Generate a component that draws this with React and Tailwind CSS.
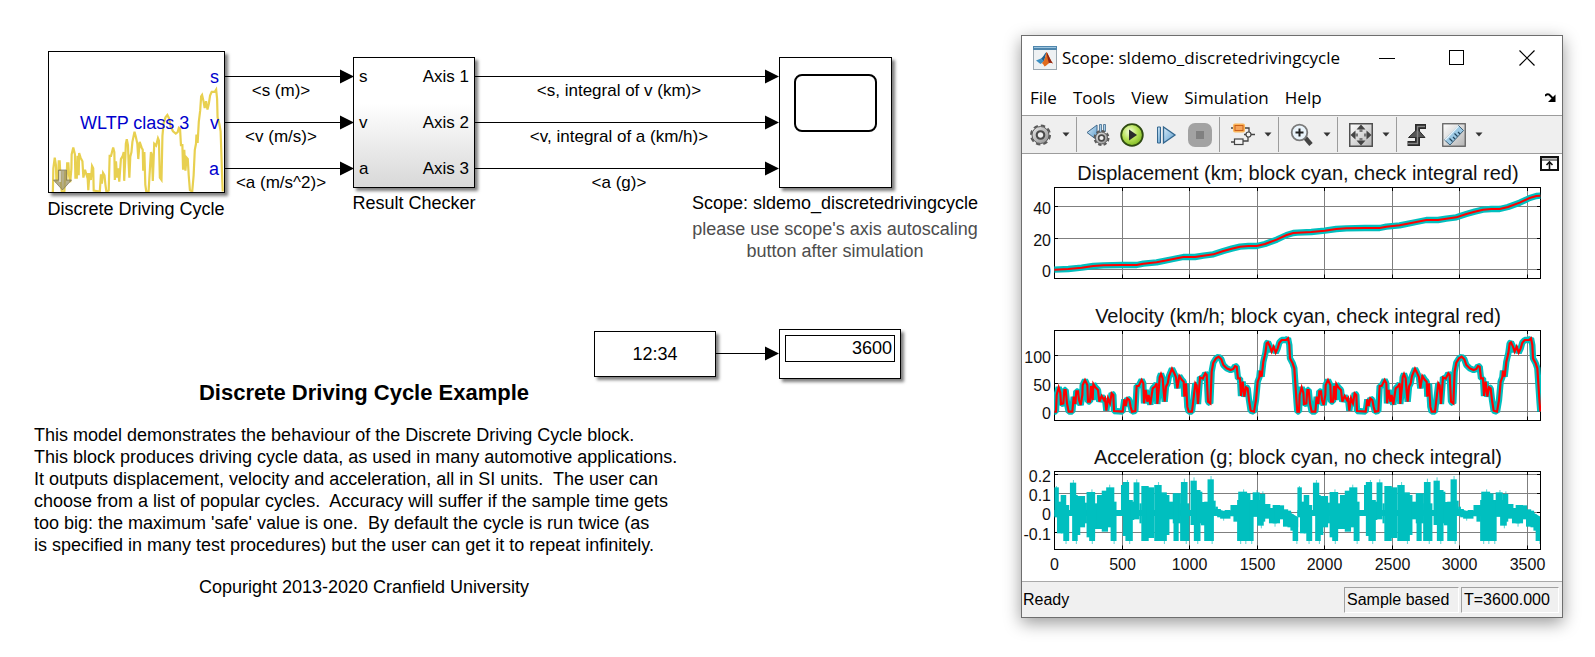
import React from "react";

/* Speed trace of one 1800 s cycle, in plot units: x 133..862, y 335 = standstill */
const CYCLE = [
  [133,335],[138,335],[140,285],[146,262],[151,278],[153,312],[160,310],[163,270],[167,270],[171,310],[176,335],[187,335],
  [191,290],[196,312],[199,274],[204,274],[207,300],[212,315],[217,285],[218,255],[225,240],[232,255],[234,305],[240,305],
  [243,258],[248,300],[250,252],[256,262],[264,270],[268,305],[275,288],[282,300],[285,295],[289,332],[294,295],[300,310],
  [305,280],[310,285],[312,333],[338,335],[343,298],[347,318],[352,295],[358,300],[362,320],[366,335],[376,333],[380,258],
  [386,258],[395,240],[400,250],[402,310],[407,270],[412,305],[416,285],[421,314],[428,265],[436,258],[440,250],[442,312],
  [447,260],[449,232],[453,222],[458,235],[461,275],[464,305],[468,260],[473,250],[477,228],[486,206],[492,218],[498,232],
  [502,265],[508,228],[516,240],[521,245],[523,290],[528,250],[532,320],[536,335],[546,335],[550,300],[556,250],[560,256],
  [564,312],[570,232],[578,236],[586,220],[590,225],[594,305],[601,310],[605,215],[610,188],[618,175],[626,170],[634,178],
  [640,195],[650,205],[662,210],[670,207],[675,198],[680,200],[684,235],[690,235],[693,288],[698,245],[703,290],[708,262],
  [713,265],[717,300],[722,332],[732,335],[738,300],[743,245],[748,232],[750,212],[755,230],[760,185],[766,160],[770,130],
  [774,127],[780,140],[785,155],[791,140],[797,158],[803,145],[808,128],[815,120],[828,120],[834,115],[838,135],[840,175],
  [848,190],[853,205],[856,250],[860,310],[862,335],
];

const DISTANCE = [
  [133,359],[175,357],[215,353],[250,348],[280,346],[335,345],[380,345],[400,341],[440,337],[490,327],[520,321],[555,321],
  [580,317],[610,313],[640,303],[665,296],[690,290],[715,288],[740,288],[765,282],[800,269],[830,255],[850,249],[862,248],
];

/* Acceleration bars: x start, x end, top, bottom */
const BARS = [
  [120,132,142,232],[127,142,185,280],[137,152,165,280],[144,160,195,303],[155,164,210,228],[162,179,128,228],[168,183,165,303],
  [180,190,168,285],[188,203,168,262],[200,208,188,250],[207,230,156,292],[214,230,156,303],[229,236,190,267],[235,252,165,267],
  [248,265,152,275],[260,282,142,262],[272,288,185,303],[287,301,211,228],[300,308,135,228],[305,322,126,288],[312,332,180,303],
  [325,336,185,240],[334,350,127,238],[350,356,190,250],[355,375,138,303],[370,390,142,294],[390,410,135,303],[408,424,157,303],
  [420,431,165,285],[428,444,185,238],[440,462,160,250],[442,456,160,303],[462,480,126,303],[460,485,190,303],[484,490,211,228],
  [488,505,122,255],[497,515,150,303],[505,520,155,250],[516,536,186,256],[525,550,185,303],[534,551,118,303],[549,556,182,228],
  [555,562,200,228],[560,570,207,232],[568,596,214,236],[580,596,210,228],[596,616,195,228],[604,616,195,245],[614,658,180,303],
  [617,641,155,303],[638,650,160,303],[648,658,185,303],[656,675,157,230],[668,686,180,257],[674,690,162,245],[688,704,192,236],
  [700,722,204,250],[710,730,195,250],[716,741,196,238],[738,752,208,260],[750,760,212,262],[758,766,222,272],[764,779,230,303],
];
const SPIKES = [
  [124,138,150],[170,120,140],[220,148,160],[268,134,150],[316,120,135],[341,118,135],[400,126,140],[470,116,130],[496,112,130],[542,108,125],
  [630,148,160],[666,150,160],[682,154,170],[150,300,312],[178,300,312],[221,300,312],[280,300,312],[322,300,312],[416,300,312],[475,300,312],
  [506,300,312],[545,300,312],[622,300,312],[636,300,312],[652,300,312],[678,250,265],[715,245,260],[576,230,242],[774,300,312],
];

const pts = (list, dx = 0, dy = 0) => list.map(([x, y]) => `${x + dx},${y + dy}`).join(" ");
const TWO_CYCLES = pts(CYCLE) + " " + pts(CYCLE, 729);
const TWO_DISTANCES = pts(DISTANCE) + " " + pts(DISTANCE, 729, -111);

const XT = [0, 500, 1000, 1500, 2000, 2500, 3000, 3500];
const xAt = (t) => Math.round(31 + t * 0.135) + 0.5;

function Frame({ bottom, ticks }) {
  return (
    <g fill="none" strokeWidth="1">
      <g stroke="#7f7f7f">
        {XT.slice(1).map((t) => <line key={t} x1={xAt(t)} x2={xAt(t)} y1="3" y2={bottom} />)}
        {ticks.map(([y]) => <line key={y} x1="31" x2="517" y1={y} y2={y} />)}
      </g>
      <g stroke="#000">
        <rect x="31.5" y="3.5" width="486" height={bottom - 3.5} />
        {XT.map((t) => <path key={t} d={`M${xAt(t)} 3v4M${xAt(t)} ${bottom - 4}v4`} />)}
        {ticks.map(([y]) => <path key={y} d={`M31 ${y}h4M514 ${y}h4`} />)}
      </g>
    </g>
  );
}

function YLabels({ ticks }) {
  return ticks.map(([y, label]) => (
    <text key={label} x="28" y={y + 7} textAnchor="end">{label}</text>
  ));
}

function Plot({ title, height, children }) {
  return (
    <figure className="pt-2">
      <figcaption className="pr-6 pl-9 text-center text-[20px] leading-[22px] whitespace-nowrap text-[#111]">{title}</figcaption>
      <svg viewBox={`-1 0 540 ${height}`} className="block w-full fill-[#111] text-[16px]" role="img" aria-label={title}>
        {children}
      </svg>
    </figure>
  );
}

function Caret({ label }) {
  return (
    <button aria-label={label} className="flex h-6 w-4 items-center justify-center">
      <svg width="8" height="5" viewBox="0 0 8 5"><path d="M0.5 0.5h7L4 4.5z" fill="#333" /></svg>
    </button>
  );
}
function Sep() {
  return <div className="h-[35px] w-px shrink-0 bg-[#9c9c9c]" />;
}
function Tool({ label, children }) {
  return (
    <button aria-label={label} className="h-6 w-6 shrink-0">
      <svg width="24" height="24" viewBox="0 0 24 24">{children}</svg>
    </button>
  );
}

function Gear({ cx, cy, r }) {
  const step = ((r - 1) * Math.PI) / 8;
  return (
    <g transform={`translate(${cx} ${cy})`}>
      <circle r={r - 1} fill="none" stroke="#5a5a5a" strokeWidth="2" strokeDasharray={`${step * 1.2} ${step * 0.8}`} />
      <circle r={r - 2} fill="url(#steel)" stroke="#5a5a5a" strokeWidth="1" />
      <circle r={r * 0.36} fill="#efefef" stroke="#4a4a4a" strokeWidth={r * 0.2} />
    </g>
  );
}

function Toolbar() {
  return (
    <div className="flex h-[39px] items-center border-t border-b border-[#9c9c9c] bg-[#efefef] pl-2">
      <svg width="0" height="0" className="absolute">
        <defs>
          <linearGradient id="steel" x1="0" y1="0" x2="1" y2="1"><stop offset="0" stopColor="#e8e8e8" /><stop offset="1" stopColor="#909090" /></linearGradient>
          <linearGradient id="blue" x1="0" y1="0" x2="1" y2="1"><stop offset="0" stopColor="#d8ebf8" /><stop offset="1" stopColor="#5b9ccc" /></linearGradient>
          <linearGradient id="tile" x1="0" y1="0" x2="1" y2="1"><stop offset="0" stopColor="#fff" /><stop offset="1" stopColor="#b4b4b4" /></linearGradient>
          <radialGradient id="green" cx=".4" cy=".35" r=".7"><stop offset="0" stopColor="#f4ffe0" /><stop offset=".5" stopColor="#b9e35a" /><stop offset="1" stopColor="#79b51c" /></radialGradient>
        </defs>
      </svg>
      <div className="flex items-center gap-1 pr-[2px]">
        <Tool label="Configuration properties"><Gear cx={10.5} cy={12} r={10.5} /></Tool>
        <Caret label="Configuration menu" />
      </div>
      <Sep />
      <div className="flex gap-[10px] pr-[7px] pl-[9px]">
        <Tool label="Stepping options">
          <path d="M11 2v15L1 9.500z" fill="url(#blue)" stroke="#41698c" />
          <path d="M13.500 1.500h2v9h-2zM17.500 1.500h2v7h-2z" fill="#a9cfea" stroke="#41698c" strokeWidth=".8" />
          <Gear cx={15.500} cy={15} r={8} />
        </Tool>
        <Tool label="Run">
          <circle cx="12" cy="12" r="10.800" fill="url(#green)" stroke="#2f4a12" strokeWidth="1.800" />
          <path d="M9 6.500v11l8-5.500z" fill="#2b2b2b" />
        </Tool>
        <Tool label="Step forward">
          <path d="M3.500 4h3v16h-3z" fill="url(#blue)" stroke="#34678f" />
          <path d="M9.500 4v16L21 12z" fill="url(#blue)" stroke="#34678f" strokeWidth="1.300" />
        </Tool>
        <Tool label="Stop">
          <rect width="24" height="24" rx="7" fill="#a2a2a2" />
          <rect x="8" y="8" width="8" height="8" fill="#808080" />
        </Tool>
      </div>
      <Sep />
      <div className="flex items-center gap-[5px] pr-[2px] pl-[11px]">
        <Tool label="Highlight block">
          <path d="M0 5h3M13 5h5v4M17 14v4h-5M0 19h3M13 11.500h2M20 11.500h4" fill="none" stroke="#444" strokeWidth="1.300" />
          <rect x="3" y="1.500" width="10" height="7" rx="1" fill="#f28a35" stroke="#fbb65c" strokeWidth="2" />
          <rect x="4" y="2.500" width="8" height="5" fill="#f6a55c" stroke="#c9601a" strokeWidth="1" />
          <rect x="3.500" y="16" width="8.500" height="5.500" fill="#f4f4f4" stroke="#444" strokeWidth="1.200" />
          <circle cx="17.500" cy="11.500" r="2.500" fill="#f4f4f4" stroke="#444" strokeWidth="1.200" />
        </Tool>
        <Caret label="Highlight menu" />
      </div>
      <Sep />
      <div className="flex items-center gap-[5px] pr-[2px] pl-[11px]">
        <Tool label="Zoom">
          <path d="M15 14.500l6 7" stroke="#444" strokeWidth="4.500" />
          <circle cx="9.500" cy="9.500" r="7.800" fill="#eaf4fb" stroke="#7a7a7a" strokeWidth="1.800" />
          <path d="M9.500 5.500v8M5.500 9.500h8" stroke="#222" strokeWidth="2" />
        </Tool>
        <Caret label="Zoom menu" />
      </div>
      <Sep />
      <div className="flex items-center gap-[5px] pr-[2px] pl-[11px]">
        <Tool label="Scale axes">
          <rect x=".75" y=".75" width="22.500" height="22.500" fill="url(#tile)" stroke="#505050" strokeWidth="1.500" />
          <path d="M12 1.500l4.500 5h-9zM12 22.500l4.500-5h-9zM1.500 12l5-4.500v9zM22.500 12l-5-4.500v9z" fill="#444" />
          <path d="M12 6v3M12 15v3M6 12h3M15 12h3" stroke="#777" strokeWidth="3" />
        </Tool>
        <Caret label="Scale menu" />
      </div>
      <Sep />
      <div className="flex items-center pl-2">
        <Tool label="Triggers">
          <path d="M2.500 20.500h10V3.500H21" fill="none" stroke="#2a2a2a" strokeWidth="5" />
          <path d="M3.500 14.500L12.500 6l7.500 8.500z" fill="#555" stroke="#2a2a2a" />
          <path d="M3 20.500h9.500V3.500h7.500" fill="none" stroke="#858585" strokeWidth="1.500" />
        </Tool>
        <div className="flex items-center gap-[5px] pl-[13px]">
          <Tool label="Measurements">
            <rect x=".75" y=".75" width="22.500" height="22.500" fill="url(#tile)" stroke="#606060" strokeWidth="1.300" />
            <path d="M16.500 2.500l5 5L8 22l-5.500-5z" fill="#9cc9e4" stroke="#40647c" />
            <path d="M18 11l-2-2M15.500 13.500l-3-3M13 16l-2-2M10.500 18.500l-3-3" stroke="#22465e" strokeWidth="1.200" />
            <path d="M16.500 3L3 17" stroke="#e8f4fb" strokeWidth="1.500" />
          </Tool>
          <Caret label="Measurements menu" />
        </div>
      </div>
    </div>
  );
}

const T1 = [[22.5, "40"], [54.5, "20"], [85.5, "0"]];
const T2 = [[28.5, "100"], [56.5, "50"], [84.5, "0"]];
const T3 = [[6.5, "0.2"], [25.5, "0.1"], [44.5, "0"], [64.5, "-0.1"]];

function ScopeWindow() {
  return (
    <section className="mt-[35px] mr-8 flex min-w-[542px] flex-1 flex-col self-start border border-[#6e6e6e] bg-white shadow-[0_5px_16px_rgba(0,0,0,0.4)]">
      <header className="flex h-11 items-center pl-[11px] font-['Open_Sans','Noto_Sans',sans-serif]">
        <svg width="24" height="24" viewBox="0 0 24 24" aria-hidden="true">
          <rect x=".5" y=".5" width="23" height="23" fill="#eef1f3" stroke="#9aa7b0" />
          <rect width="24" height="4" fill="#4f86ad" /><rect x="1" y="1" width="22" height="1" fill="#9cc4de" />
          <path d="M3 14.500l5-2 3 3-3.500 2.500z" fill="#3b8fc2" />
          <path d="M8 12.500c2-1 3.500-5 5.500-6.500l-2.500 9.500z" fill="#1f5f8f" />
          <path d="M13.500 6c1.500 1 3.500 8 6.500 11.500-2-1-3.500-1-5 .500-1.500 1.300-2 2-3.500 2.500-1-2-1.500-3-3-3.500 3-1 4-7 5-11z" fill="#e06a1c" />
          <path d="M13.500 6c1.500 1 3.500 8 6.500 11.500-1.500-.8-3-1-4-.3C15 14 14 10 13.500 6z" fill="#8e2416" />
        </svg>
        <h1 className="ml-[5px] flex-1 text-[17px] leading-6 whitespace-nowrap">Scope: sldemo_discretedrivingcycle</h1>
        <div className="flex gap-[54px] pr-[27px]">
          <button aria-label="Minimize" className="h-4 w-4"><svg width="16" height="16"><path d="M0 8.500h16" stroke="#000" /></svg></button>
          <button aria-label="Maximize" className="h-4 w-4"><svg width="16" height="16"><rect x=".5" y=".5" width="14" height="14" fill="none" stroke="#000" /></svg></button>
          <button aria-label="Close" className="h-4 w-4"><svg width="16" height="16"><path d="M.5 .5l15 15M15.500 .5l-15 15" stroke="#000" strokeWidth="1.200" /></svg></button>
        </div>
      </header>
      <nav className="flex h-[35px] items-center gap-4 pl-2 font-['Open_Sans','Noto_Sans',sans-serif] text-[17px] leading-6">
        {["File", "Tools", "View", "Simulation", "Help"].map((m) => <button key={m}>{m}</button>)}
        <button aria-label="Dock" className="mr-[6px] ml-auto">
          <svg width="11" height="10" viewBox="0 0 11 10"><path d="M0 3c2-2.500 4-2.500 5.500 0L8 5.500" fill="none" stroke="#000" strokeWidth="2" /><path d="M10.500 1.500V9H3z" fill="#000" /></svg>
        </button>
      </nav>
      <Toolbar />
      <div className="relative font-['Liberation_Sans',Arial,sans-serif]">
        <button aria-label="Maximize axes" className="absolute top-[2px] right-[3px]">
          <svg width="19" height="15" viewBox="0 0 19 15" className="block">
            <rect x="1" y="1" width="17" height="13" fill="#fff" stroke="#111" strokeWidth="2" />
            <path d="M2 4h15" stroke="#111" /><path d="M2 2.500h15" stroke="#bbb" />
            <path d="M9.500 13V7M6.500 9l3-3 3 3" fill="none" stroke="#111" strokeWidth="1.600" />
          </svg>
        </button>
        <Plot title="Displacement (km; block cyan, check integral red)" height={113}>
          <Frame bottom={94.5} ticks={T1} />
          <YLabels ticks={T1} />
          <svg x="31" y="3" width="487" height="92" viewBox="31 3 487 92">
            <g transform="translate(-13 -34) scale(.33333)" fill="none" strokeLinejoin="round">
              <polyline points={TWO_DISTANCES} stroke="#00bfbf" strokeWidth="19" />
              <polyline points={TWO_DISTANCES} stroke="#f00" strokeWidth="6" />
            </g>
          </svg>
        </Plot>
        <Plot title="Velocity (km/h; block cyan, check integral red)" height={111}>
          <Frame bottom={93.5} ticks={T2} />
          <YLabels ticks={T2} />
          <svg x="31" y="3" width="487" height="91" viewBox="31 3 487 91">
            <g transform="translate(-13 -27) scale(.33333)" fill="none" strokeLinejoin="miter">
              <polyline points={TWO_CYCLES} stroke="#00bfbf" strokeWidth="19" strokeLinejoin="bevel" />
              <polyline points={TWO_CYCLES} stroke="#f00" strokeWidth="6.500" />
            </g>
          </svg>
        </Plot>
        <Plot title="Acceleration (g; block cyan, no check integral)" height={113}>
          <Frame bottom={81.5} ticks={T3} />
          <YLabels ticks={T3} />
          <svg x="31" y="4" width="486" height="77" viewBox="31 4 486 77">
            <g transform="translate(-13 -28) scale(.36990 .33333)" fill="#00bfbf">
              {[0, 657].map((dx) => (
                <g key={dx} transform={`translate(${dx} 0)`}>
                  <rect x="120" y="210" width="430" height="18" />
                  <path d="M550 205l30 8 40-4 130 3 29 20v30l-30-25-60-7-139-2z" />
                  {BARS.map(([a, b, t, u], i) => <rect key={i} x={a} y={t} width={b - a} height={u - t} />)}
                  {SPIKES.map(([x, t, u]) => <rect key={`${x}-${t}`} x={x} y={t} width="3" height={u - t} opacity=".6" />)}
                </g>
              ))}
            </g>
          </svg>
          {XT.map((t) => <text key={t} x={xAt(t)} y="102" textAnchor="middle">{t}</text>)}
        </Plot>
      </div>
      <footer className="flex h-9 items-center border-t border-[#a9a9a9] bg-[#f0f0f0] pr-[3px] font-['Liberation_Sans',Arial,sans-serif] text-[16px] leading-6">
        <span className="flex-1 pl-px">Ready</span>
        <span className="mr-[2px] w-[115px] border border-t-[#a0a0a0] border-r-white border-b-white border-l-[#a0a0a0] pl-[2px] whitespace-nowrap">Sample based</span>
        <span className="w-[98px] border border-t-[#a0a0a0] border-r-white border-b-white border-l-[#a0a0a0] pl-[2px] whitespace-nowrap">T=3600.000</span>
      </footer>
    </section>
  );
}

const WIRES = [
  [225, 354, 76], [225, 354, 122], [225, 354, 168],
  [475, 779, 76], [475, 779, 122], [475, 779, 168],
  [716, 779, 353],
];

function Wires() {
  return (
    <svg width="1000" height="381" viewBox="0 0 1000 381" className="absolute top-0 left-0">
      {WIRES.map(([a, b, y]) => (
        <g key={`${a}-${y}`}>
          <line x1={a} x2={b - 10} y1={y + 0.5} y2={y + 0.5} stroke="#000" />
          <path d={`M${b - 14} ${y - 6.5}v14l14-7z`} />
        </g>
      ))}
    </svg>
  );
}

const block = "absolute border-[1px] border-black bg-white shadow-[3px_3px_3px_rgba(0,0,0,0.5)]";
const signal = "absolute -translate-x-1/2 whitespace-nowrap text-[17px] leading-5";
const name = "absolute -translate-x-1/2 whitespace-nowrap text-[18px] leading-[22px]";

function Diagram() {
  return (
    <div className="relative h-[381px]">
      <div className={`${block} top-[51px] left-[48px] h-[142px] w-[177px]`}>
        <svg width="175" height="140" viewBox="0 0 175 140" className="absolute top-0 left-0">
          <polyline points={pts(CYCLE)} transform="translate(-28.500 -15.800) scale(.2346 .4636)" fill="none" stroke="#e8d050" strokeWidth="2.200" vectorEffect="non-scaling-stroke" />
          <path d="M9.500 118h8v10h5L13.500 138 4.500 128h5z" fill="#9c9468" fillOpacity=".75" stroke="#777258" strokeOpacity=".7" />
          <path d="M11 119v11" stroke="#ddd" strokeWidth="1.500" />
        </svg>
        <span className="absolute top-[60px] left-[31px] text-[18px] leading-[22px] whitespace-nowrap text-[#0000cd]">WLTP class 3</span>
        <div className="absolute top-0 right-[5px] flex flex-col gap-6 pt-[14px] text-right text-[18px] leading-[22px] text-[#0000cd]">
          <span>s</span><span>v</span><span>a</span>
        </div>
      </div>
      <div className={`${block} top-[57px] left-[353px] flex h-[131px] w-[122px] justify-between bg-linear-to-b from-white from-35% to-[#d8d8d8] px-[5px] pt-[9px] text-[17px] leading-5`}>
        <div className="flex flex-col gap-[26px]"><span>s</span><span>v</span><span>a</span></div>
        <div className="flex flex-col gap-[26px] text-right"><span>Axis 1</span><span>Axis 2</span><span>Axis 3</span></div>
      </div>
      <div className={`${block} top-[57px] left-[779px] h-[131px] w-[113px] px-[14px] pt-4`}>
        <div className="h-[58px] rounded-lg border-2 border-black" />
      </div>
      <div className={`${block} top-[331px] left-[594px] flex h-[46px] w-[122px] items-center justify-center pt-px text-[18px]`}>12:34</div>
      <div className={`${block} top-[329px] left-[779px] h-[50px] w-[122px] p-[5px]`}>
        <output className="block h-[27px] border border-black pr-[2px] text-right text-[18px] leading-[25px]">3600</output>
      </div>
      <Wires />
      <span className={`${signal} top-[81px] left-[281px]`}>&lt;s (m)&gt;</span>
      <span className={`${signal} top-[127px] left-[281px]`}>&lt;v (m/s)&gt;</span>
      <span className={`${signal} top-[173px] left-[281px]`}>&lt;a (m/s^2)&gt;</span>
      <span className={`${signal} top-[81px] left-[619px]`}>&lt;s, integral of v (km)&gt;</span>
      <span className={`${signal} top-[127px] left-[619px]`}>&lt;v, integral of a (km/h)&gt;</span>
      <span className={`${signal} top-[173px] left-[619px]`}>&lt;a (g)&gt;</span>
      <span className={`${name} top-[198px] left-[136px]`}>Discrete Driving Cycle</span>
      <span className={`${name} top-[192px] left-[414px]`}>Result Checker</span>
      <span className={`${name} top-[192px] left-[835px]`}>Scope: sldemo_discretedrivingcycle</span>
      <p className={`${name} top-[218px] left-[835px] text-center text-[#4d4d4d]`}>please use scope's axis autoscaling<br />button after simulation</p>
    </div>
  );
}

export default function App() {
  return (
    <main className="flex min-h-screen bg-white pb-10 text-black">
      <section className="w-[1021px] shrink-0 font-['Liberation_Sans',Arial,sans-serif]">
        <Diagram />
        <article className="ml-[34px] w-[660px] text-[18px] leading-[22px]">
          <h2 className="text-center text-[22px] leading-6 font-bold">Discrete Driving Cycle Example</h2>
          <p className="mt-[19px] whitespace-pre">
            {"This model demonstrates the behaviour of the Discrete Driving Cycle block.\nThis block produces driving cycle data, as used in many automotive applications.\nIt outputs displacement, velocity and acceleration, all in SI units.  The user can\nchoose from a list of popular cycles.  Accuracy will suffer if the sample time gets\ntoo big: the maximum 'safe' value is one.  By default the cycle is run twice (as\nis specified in many test procedures) but the user can get it to repeat infinitely."}
          </p>
          <p className="mt-5 text-center">Copuright 2013-2020 Cranfield University</p>
        </article>
      </section>
      <ScopeWindow />
    </main>
  );
}
